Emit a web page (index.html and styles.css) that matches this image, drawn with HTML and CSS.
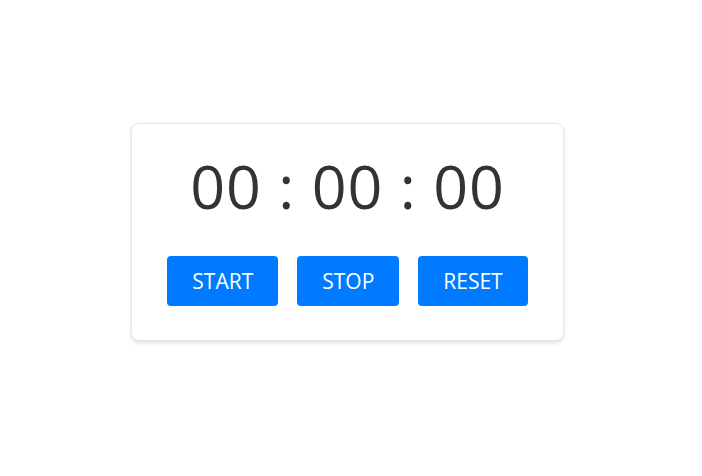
FILE: index.html
```html
<!DOCTYPE html>
<html>
<head>
<meta charset="utf-8">
<link rel="stylesheet" href="styles.css">
</head>
<body>
<div class="card">
  <div class="time">00 : 00 : 00</div>
  <div class="controls">
    <button class="btn">START</button>
    <button class="btn">STOP</button>
    <button class="btn">RESET</button>
  </div>
</div>
</body>
</html>
```
FILE: styles.css
```css
html, body {
  margin: 0;
  padding: 0;
  background: #fff;
}
body {
  height: 100vh;
  display: flex;
  align-items: center;
  justify-content: center;
  font-family: "Open Sans", "Noto Sans", sans-serif;
}
.card {
  width: 433px;
  box-sizing: border-box;
  margin: 0 7px 12px 0;
  padding: 31px 34px 34px;
  background: #fff;
  border: 1px solid #e6e6e6;
  border-radius: 8px;
  box-shadow: 0 2px 4px rgba(0,0,0,0.12);
  display: flex;
  flex-direction: column;
  align-items: center;
}
.time {
  font-size: 61px;
  line-height: 61px;
  color: #333;
  letter-spacing: 0.8px;
}
.controls {
  margin-top: 40px;
  display: flex;
  gap: 19px;
  justify-content: center;
}
.btn {
  height: 50px;
  padding: 0 25px;
  border: none;
  border-radius: 4px;
  background: #007bff;
  color: #fff;
  font-family: "Open Sans", "Noto Sans", sans-serif;
  font-size: 21px;
}
```
